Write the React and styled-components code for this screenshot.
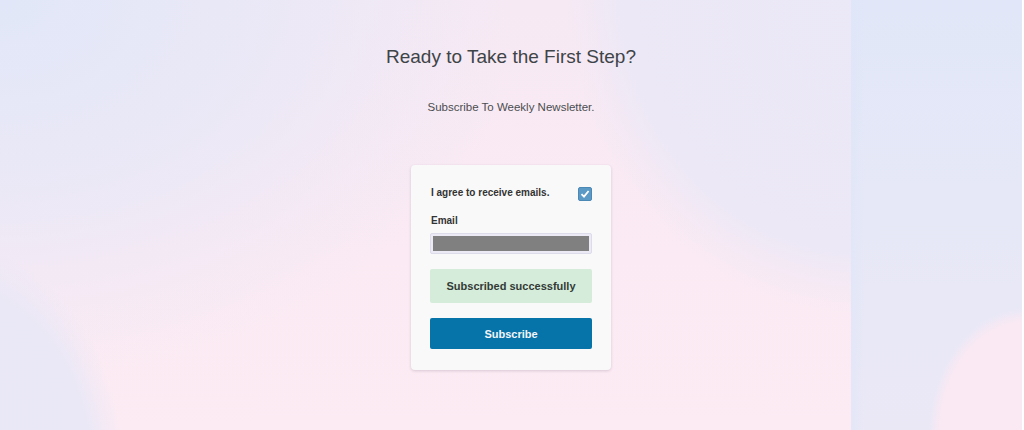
import React from "react";
import styled, { createGlobalStyle } from "styled-components";

const Global = createGlobalStyle`
  html, body { margin: 0; padding: 0; background: #ffffff; }
  body { font-family: "Liberation Sans", Arial, sans-serif; }
  * { box-sizing: border-box; }
`;

const Page = styled.div`
  position: relative;
  width: 1022px;
  height: 430px;
  overflow: hidden;
`;

const Main = styled.main`
  width: 1022px;
  height: 430px;
  display: flex;
  flex-direction: column;
  align-items: center;
  padding-top: 45px;
  background:
    radial-gradient(ellipse 300px 330px at 865px -15px, #ebe8f7 0%, #ece8f6 80%, rgba(236,232,246,0) 100%),
    radial-gradient(ellipse 170px 230px at -45px 475px, #e9e8f6 0%, #eae8f6 80%, rgba(233,232,246,0) 100%),
    radial-gradient(ellipse 520px 380px at 0px 0px, #e1e7f8 0%, rgba(232,232,247,0.9) 45%, rgba(240,233,245,0) 100%),
    linear-gradient(180deg, #f6e9f4 0%, #fbeaf3 60%, #fcebf3 100%);
`;

/* decorative side panel laid over the right edge of the page */
const Side = styled.aside`
  position: absolute;
  top: 0;
  right: 0;
  width: 171px;
  height: 430px;
  background:
    radial-gradient(ellipse 100px 125px at 178px 432px, #fae9f3 0%, #fae9f3 88%, rgba(250,233,243,0) 100%),
    linear-gradient(90deg, rgba(222,230,248,0.6) 0px, rgba(222,230,248,0) 14px),
    linear-gradient(180deg, #e1e7f8 0%, #e6e8f7 45%, #ebe8f6 100%);
`;

const Title = styled.h1`
  margin: 0;
  font-size: 19px;
  line-height: 24px;
  font-weight: 400;
  color: #3e4447;
`;

const Subtitle = styled.p`
  margin: 31px 0 0;
  font-size: 11.5px;
  line-height: 14px;
  color: #4b4d50;
`;

const Card = styled.form`
  margin-top: 51px;
  width: 200px;
  padding: 20px 19px 21px;
  background: #f9f9f9;
  border-radius: 4px;
  box-shadow: 0 1px 3px rgba(60, 40, 80, 0.18);
  display: flex;
  flex-direction: column;
`;

const AgreeRow = styled.label`
  display: flex;
  justify-content: space-between;
  align-items: center;
  height: 14px;
  padding-left: 1px;
  font-size: 10px;
  font-weight: 700;
  color: #333;
`;

const Check = styled.span`
  width: 14px;
  height: 14px;
  border-radius: 2px;
  background: #5b9ac5;
  border: 1px solid #4c88b6;
  display: flex;
  align-items: center;
  justify-content: center;
  margin-top: 3px;
`;

const FieldLabel = styled.div`
  margin-top: 15px;
  padding-left: 1px;
  font-size: 10px;
  line-height: 14px;
  font-weight: 700;
  color: #333;
`;

const Input = styled.div`
  margin-top: 5px;
  height: 21px;
  border: 1px solid #dcdcea;
  border-radius: 2px;
  background: #ecebf5;
  padding: 2px;
`;

const InputFill = styled.div`
  height: 100%;
  background: #808080;
`;

const Notice = styled.div`
  margin-top: 15px;
  height: 34px;
  border-radius: 2px;
  background: #d5ecda;
  color: #333a35;
  font-size: 11px;
  font-weight: 700;
  display: flex;
  align-items: center;
  justify-content: center;
`;

const Button = styled.button`
  margin-top: 15px;
  height: 31px;
  border: 0;
  border-radius: 2px;
  background: #0673a9;
  color: #f3f6f8;
  font-family: "Liberation Sans", Arial, sans-serif;
  font-size: 11px;
  font-weight: 700;
  cursor: pointer;
`;

export default function App() {
  return (
    <>
      <Global />
      <Page>
        <Main>
          <Title>Ready to Take the First Step?</Title>
          <Subtitle>Subscribe To Weekly Newsletter.</Subtitle>
          <Card onSubmit={(e) => e.preventDefault()}>
            <AgreeRow>
              I agree to receive emails.
              <Check>
                <svg width="10" height="10" viewBox="0 0 10 10">
                  <path d="M1.5 5.2 L4 7.6 L8.6 2" fill="none" stroke="#ffffff" strokeWidth="1.8" />
                </svg>
              </Check>
            </AgreeRow>
            <FieldLabel>Email</FieldLabel>
            <Input>
              <InputFill />
            </Input>
            <Notice>Subscribed successfully</Notice>
            <Button type="submit">Subscribe</Button>
          </Card>
        </Main>
        <Side />
      </Page>
    </>
  );
}
